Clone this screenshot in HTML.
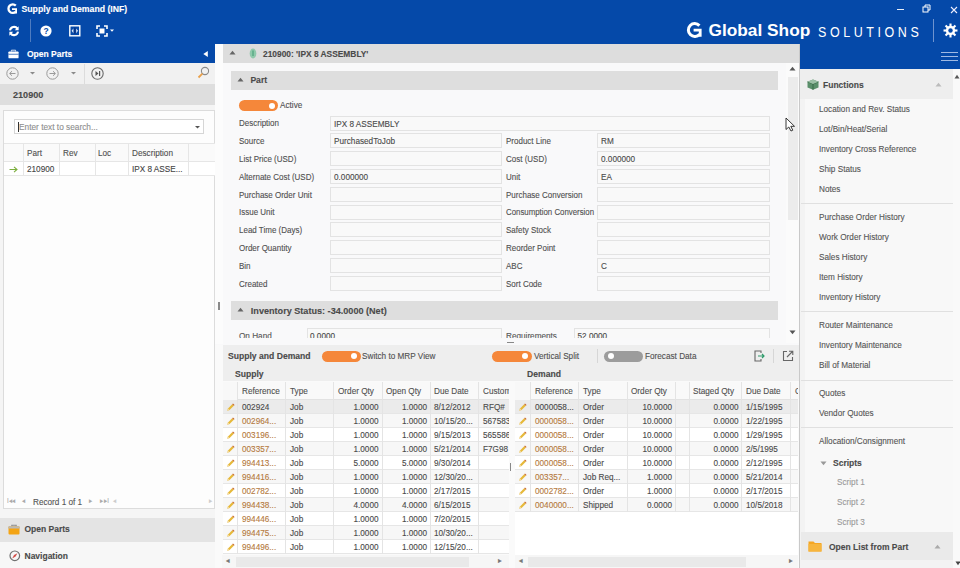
<!DOCTYPE html>
<html><head><meta charset="utf-8"><style>
*{margin:0;padding:0;box-sizing:border-box}
html,body{width:960px;height:568px;overflow:hidden}
body{position:relative;background:#f8f8f8;font-family:"Liberation Sans",sans-serif;font-size:8px;color:#555}
.a{position:absolute}
.t{position:absolute;white-space:nowrap;line-height:1;-webkit-text-stroke:0.12px currentColor}
svg{overflow:visible}
</style></head><body>
<div class="a" style="left:0px;top:0px;width:960px;height:44px;background:#0549a9"></div>
<div class="a" style="left:0px;top:44px;width:215px;height:19px;background:#0549a9"></div>
<div class="a" style="left:800px;top:44px;width:160px;height:25px;background:#0549a9"></div>
<div class="t" style="left:21.5px;top:4.64px;font-size:8.70px;color:#ffffff;font-weight:bold;">Supply and Demand (INF)</div>
<svg class="a" style="left:6px;top:3px" width="13" height="12" viewBox="0 0 13 12">
<path d="M9.8 2.6 A4.3 4.3 0 1 0 9.9 8.6" fill="none" stroke="#fff" stroke-width="2.3"/><path d="M6 5.2H11V10.6H9.2V6.9H6Z" fill="#fff"/></svg>
<div class="a" style="left:897px;top:9px;width:7px;height:1.2px;background:#e8eef8"></div>
<svg class="a" style="left:922px;top:4px" width="9" height="9" viewBox="0 0 9 9"><rect x="1" y="3" width="5" height="5" fill="none" stroke="#fff" stroke-width="1"/><path d="M3 3V1h5v5H6" fill="none" stroke="#fff" stroke-width="1"/></svg>
<svg class="a" style="left:949.5px;top:5.5px" width="8" height="8" viewBox="0 0 8 8"><path d="M1 1L7 7M7 1L1 7" stroke="#eef" stroke-width="1.1"/></svg>
<svg class="a" style="left:685px;top:22px" width="18" height="17" viewBox="0 0 18 17">
<path d="M14.4 3.6 A6.4 6.4 0 1 0 14.6 12.2" fill="none" stroke="#fff" stroke-width="3"/><path d="M8.6 6.8H16.6V14.8H13.8V9.6H8.6Z" fill="#fff"/></svg>
<div class="t" style="left:708.5px;top:22.06px;font-size:17.30px;color:#ffffff;font-weight:bold;-webkit-text-stroke:0;">Global Shop</div>
<div class="t" style="left:817.5px;top:24.55px;font-size:14.00px;color:#ffffff;transform:scaleX(0.8929);transform-origin:left top;letter-spacing:4px;-webkit-text-stroke:0;">SOLUTIONS</div>
<div class="a" style="left:933px;top:19px;width:1px;height:23px;background:#6f93cf"></div>
<svg class="a" style="left:943px;top:23px" width="15" height="15" viewBox="0 0 17 17">
<g fill="#fff"><circle cx="8.5" cy="8.5" r="5.4"/><rect x="7.3" y="0.6" width="2.4" height="4" transform="rotate(0 8.5 8.5)"/><rect x="7.3" y="0.6" width="2.4" height="4" transform="rotate(45 8.5 8.5)"/><rect x="7.3" y="0.6" width="2.4" height="4" transform="rotate(90 8.5 8.5)"/><rect x="7.3" y="0.6" width="2.4" height="4" transform="rotate(135 8.5 8.5)"/><rect x="7.3" y="0.6" width="2.4" height="4" transform="rotate(180 8.5 8.5)"/><rect x="7.3" y="0.6" width="2.4" height="4" transform="rotate(225 8.5 8.5)"/><rect x="7.3" y="0.6" width="2.4" height="4" transform="rotate(270 8.5 8.5)"/><rect x="7.3" y="0.6" width="2.4" height="4" transform="rotate(315 8.5 8.5)"/></g>
<circle cx="8.5" cy="8.5" r="2.5" fill="#0549a9"/></svg>
<svg class="a" style="left:8px;top:25px" width="12" height="12" viewBox="0 0 12 12">
<path d="M2 5.4 A4.1 4.1 0 0 1 9.4 3.6" fill="none" stroke="#fff" stroke-width="2.1"/><path d="M10.6 1.2 L10.6 5.2 L6.8 5.2Z" fill="#fff"/>
<path d="M10 6.6 A4.1 4.1 0 0 1 2.6 8.4" fill="none" stroke="#fff" stroke-width="2.1"/><path d="M1.4 10.8 L1.4 6.8 L5.2 6.8Z" fill="#fff"/></svg>
<div class="a" style="left:29.5px;top:19px;width:1.5px;height:23px;background:#4f7cc0"></div>
<svg class="a" style="left:40px;top:25px" width="12" height="12" viewBox="0 0 12 12"><circle cx="6" cy="6" r="5.6" fill="#fff"/>
<text x="6" y="9.2" font-family="Liberation Sans" font-weight="bold" font-size="8.5" text-anchor="middle" fill="#0549a9">?</text></svg>
<svg class="a" style="left:68.5px;top:25px" width="12" height="12" viewBox="0 0 12 12"><rect x="0.8" y="0.8" width="10" height="10" fill="none" stroke="#fff" stroke-width="1.4"/>
<path d="M2.6 5.8L4.4 3.4V8.2Z M9 5.8L7.2 3.4V8.2Z" fill="#dfe8f6"/><rect x="5.2" y="2.6" width="1.2" height="6.4" fill="#0a2e7a"/></svg>
<svg class="a" style="left:96px;top:25px" width="20" height="12" viewBox="0 0 20 12">
<path d="M1 4V1h3M8 1h3v3M11 8v3H8M4 11H1V8" fill="none" stroke="#fff" stroke-width="1.6"/><rect x="3.5" y="3.5" width="5" height="5" fill="#fff"/>
<path d="M14 4.5h4l-2 2.2z" fill="#fff"/></svg>
<svg class="a" style="left:8px;top:48.5px" width="11" height="10" viewBox="0 0 13 11">
<path d="M4 2.5V1h5v1.5" fill="none" stroke="#fff" stroke-width="1"/><rect x="0.5" y="2.5" width="12" height="8" rx="1" fill="#fff"/><rect x="0.5" y="5.3" width="12" height="0.8" fill="#0549a9"/></svg>
<div class="t" style="left:27px;top:49.60px;font-size:8.50px;color:#ffffff;font-weight:bold;">Open Parts</div>
<svg class="a" style="left:203px;top:50.5px" width="5" height="6" viewBox="0 0 5 6"><path d="M4.8 0V6L0.3 3Z" fill="#fff"/></svg>
<div class="a" style="left:0px;top:63px;width:215px;height:505px;background:#f5f5f5"></div>
<div class="a" style="left:0px;top:63px;width:215px;height:21px;background:#f1f1f1"></div>
<svg class="a" style="left:6px;top:67px" width="13" height="13" viewBox="0 0 13 13"><circle cx="6.5" cy="6.5" r="5.7" fill="none" stroke="#9a9a9a" stroke-width="1"/><path d="M9.5 6.5H3.8M6 4.2L3.6 6.5 6 8.8" fill="none" stroke="#9a9a9a" stroke-width="1"/></svg>
<svg class="a" style="left:30px;top:71px" width="5" height="4" viewBox="0 0 5 4"><path d="M0 1h5L2.5 3.5z" fill="#8a8a8a"/></svg>
<svg class="a" style="left:46px;top:67px" width="13" height="13" viewBox="0 0 13 13"><circle cx="6.5" cy="6.5" r="5.7" fill="none" stroke="#9a9a9a" stroke-width="1"/><path d="M3.5 6.5H9.2M7 4.2L9.4 6.5 7 8.8" fill="none" stroke="#9a9a9a" stroke-width="1"/></svg>
<svg class="a" style="left:71px;top:71px" width="5" height="4" viewBox="0 0 5 4"><path d="M0 1h5L2.5 3.5z" fill="#8a8a8a"/></svg>
<div class="a" style="left:84px;top:64px;width:1px;height:20px;background:#dcdcdc"></div>
<svg class="a" style="left:91px;top:67px" width="13" height="13" viewBox="0 0 13 13"><circle cx="6.5" cy="6.5" r="5.7" fill="none" stroke="#6a6a6a" stroke-width="1.1"/><path d="M4.5 4v5l3-2.5z" fill="#555"/><rect x="8" y="4" width="1.2" height="5" fill="#555"/></svg>
<svg class="a" style="left:197px;top:66px" width="13" height="13" viewBox="0 0 13 13"><circle cx="8" cy="5" r="3.6" fill="none" stroke="#8a8a8a" stroke-width="1.1"/><path d="M5.4 7.6L1.5 11.5" stroke="#e9a04a" stroke-width="1.8"/></svg>
<div class="a" style="left:0px;top:84px;width:215px;height:21px;background:#dedede"></div>
<div class="t" style="left:13px;top:90.60px;font-size:9.10px;color:#4a4a4a;font-weight:bold;">210900</div>
<div class="a" style="left:3px;top:110px;width:212px;height:399px;background:#fdfdfd;border:1px solid #dcdcdc"></div>
<div class="a" style="left:14px;top:119px;width:190px;height:15px;background:#fff;border:1px solid #d6d6d6"></div>
<div class="a" style="left:18px;top:122px;width:1px;height:10px;background:#333"></div>
<div class="t" style="left:19px;top:123.13px;font-size:9.30px;color:#8e8e8e;transform:scaleX(0.8929);transform-origin:left top;">Enter text to search...</div>
<svg class="a" style="left:195px;top:125px" width="5" height="4" viewBox="0 0 5 4"><path d="M0 1h5L2.5 3.5z" fill="#555"/></svg>
<div class="a" style="left:4px;top:143px;width:211px;height:19px;background:#fafafa;border-top:1px solid #e6e6e6;border-bottom:1px solid #e6e6e6"></div>
<div class="a" style="left:4px;top:162px;width:211px;height:14px;background:#fff;border-bottom:1px solid #e6e6e6"></div>
<div class="a" style="left:23px;top:143px;width:1px;height:33px;background:#e6e6e6"></div>
<div class="a" style="left:59px;top:143px;width:1px;height:33px;background:#e6e6e6"></div>
<div class="a" style="left:95px;top:143px;width:1px;height:33px;background:#e6e6e6"></div>
<div class="a" style="left:128px;top:143px;width:1px;height:33px;background:#e6e6e6"></div>
<div class="a" style="left:188px;top:143px;width:1px;height:33px;background:#e6e6e6"></div>
<div class="t" style="left:27px;top:149.23px;font-size:9.18px;color:#505050;transform:scaleX(0.8929);transform-origin:left top;">Part</div>
<div class="t" style="left:63px;top:149.23px;font-size:9.18px;color:#505050;transform:scaleX(0.8929);transform-origin:left top;">Rev</div>
<div class="t" style="left:98px;top:149.23px;font-size:9.18px;color:#505050;transform:scaleX(0.8929);transform-origin:left top;">Loc</div>
<div class="t" style="left:132px;top:149.23px;font-size:9.18px;color:#505050;transform:scaleX(0.8929);transform-origin:left top;">Description</div>
<div class="t" style="left:27px;top:165.23px;font-size:9.18px;color:#444;transform:scaleX(0.8929);transform-origin:left top;">210900</div>
<div class="t" style="left:132px;top:165.23px;font-size:9.18px;color:#444;transform:scaleX(0.8929);transform-origin:left top;">IPX 8 ASSE...</div>
<svg class="a" style="left:9px;top:166px" width="9" height="7" viewBox="0 0 9 7"><path d="M0.5 3.5H8M5 0.8L8 3.5 5 6.2" fill="none" stroke="#7cae3e" stroke-width="1.1"/></svg>
<div class="t" style="left:7px;top:498.31px;font-size:6.72px;color:#aaa;transform:scaleX(0.8929);transform-origin:left top;">I◂◂</div>
<div class="t" style="left:22px;top:498.31px;font-size:6.72px;color:#aaa;transform:scaleX(0.8929);transform-origin:left top;">◂</div>
<div class="t" style="left:33px;top:497.53px;font-size:9.18px;color:#555;transform:scaleX(0.8929);transform-origin:left top;">Record 1 of 1</div>
<div class="t" style="left:89px;top:498.31px;font-size:6.72px;color:#aaa;transform:scaleX(0.8929);transform-origin:left top;">▸</div>
<div class="t" style="left:100px;top:498.31px;font-size:6.72px;color:#aaa;transform:scaleX(0.8929);transform-origin:left top;">▸▸I</div>
<div class="t" style="left:113px;top:498.31px;font-size:6.72px;color:#ccc;transform:scaleX(0.8929);transform-origin:left top;">◂</div>
<div class="t" style="left:209px;top:498.31px;font-size:6.72px;color:#ccc;transform:scaleX(0.8929);transform-origin:left top;">▸</div>
<div class="a" style="left:0px;top:517.5px;width:215px;height:24.5px;background:#e4e4e4"></div>
<svg class="a" style="left:8px;top:523.5px" width="12" height="11" viewBox="0 0 12 11"><path d="M3.8 2.5V1.2h4.4v1.3" fill="none" stroke="#8c8c8c" stroke-width="1.1"/><rect x="0.5" y="2.3" width="11" height="8.2" rx="1" fill="#f4a414"/><rect x="0.5" y="2.3" width="11" height="2.2" fill="#b9b9b9"/></svg>
<div class="t" style="left:24.5px;top:525.30px;font-size:8.50px;color:#4a4a4a;font-weight:bold;">Open Parts</div>
<div class="a" style="left:0px;top:542px;width:215px;height:26px;background:#f7f7f7"></div>
<svg class="a" style="left:8.5px;top:550px" width="12" height="12" viewBox="0 0 12 12"><circle cx="5.8" cy="5.8" r="4.8" fill="none" stroke="#707070" stroke-width="1.2"/><path d="M8.4 3.2L6.6 6.6 3.2 8.4 5 5z" fill="#d2504a"/></svg>
<div class="t" style="left:24.5px;top:551.80px;font-size:8.50px;color:#4a4a4a;font-weight:bold;">Navigation</div>
<div class="a" style="left:215px;top:44px;width:585px;height:524px;background:#f9f9fa"></div>
<div class="a" style="left:215px;top:44px;width:8px;height:300px;background:#fcfcfc"></div>
<div class="a" style="left:223px;top:44px;width:577px;height:19px;background:#dddddd"></div>
<svg class="a" style="left:229px;top:50px" width="7" height="5" viewBox="0 0 7 5"><path d="M0.5 4.5h6L3.5 0.8z" fill="#666"/></svg>
<svg class="a" style="left:249px;top:47.5px" width="8" height="11" viewBox="0 0 8 11"><ellipse cx="4" cy="5.5" rx="3.3" ry="5" fill="#8fc9ab"/><path d="M4 2.5V8" stroke="#3f9a72" stroke-width="1"/></svg>
<div class="t" style="left:263px;top:49.69px;font-size:8.40px;color:#4a4a4a;font-weight:bold;">210900: 'IPX 8 ASSEMBLY'</div>
<div class="a" style="left:231px;top:71px;width:547px;height:19px;background:#dedede"></div>
<svg class="a" style="left:237px;top:77px" width="7" height="5" viewBox="0 0 7 5"><path d="M0.5 4.5h6L3.5 0.8z" fill="#666"/></svg>
<div class="t" style="left:250.4px;top:75.92px;font-size:8.60px;color:#4a4a4a;font-weight:bold;">Part</div>
<div class="a" style="left:239px;top:100px;width:39px;height:11px;border-radius:5.5px;background:#f5873a"></div>
<div class="a" style="left:268.5px;top:102.5px;width:6px;height:6px;border-radius:3px;background:#fff"></div>
<div class="t" style="left:280px;top:101.43px;font-size:9.18px;color:#505050;transform:scaleX(0.8929);transform-origin:left top;">Active</div>
<div class="t" style="left:239px;top:119.32px;font-size:8.96px;color:#505050;transform:scaleX(0.8929);transform-origin:left top;">Description</div>
<div class="a" style="left:330px;top:115.5px;width:440px;height:15px;background:#f9f9f9;border:1px solid #e3e3e3"></div>
<div class="t" style="left:333.5px;top:119.53px;font-size:9.18px;color:#4a4a4a;transform:scaleX(0.8929);transform-origin:left top;">IPX 8 ASSEMBLY</div>
<div class="t" style="left:239px;top:137.12px;font-size:8.96px;color:#505050;transform:scaleX(0.8929);transform-origin:left top;">Source</div>
<div class="a" style="left:330px;top:133.3px;width:172px;height:15px;background:#f9f9f9;border:1px solid #e3e3e3"></div>
<div class="t" style="left:333.5px;top:137.33px;font-size:9.18px;color:#4a4a4a;transform:scaleX(0.8929);transform-origin:left top;">PurchasedToJob</div>
<div class="t" style="left:506px;top:137.12px;font-size:8.96px;color:#505050;transform:scaleX(0.8929);transform-origin:left top;">Product Line</div>
<div class="a" style="left:597px;top:133.3px;width:173px;height:15px;background:#f9f9f9;border:1px solid #e3e3e3"></div>
<div class="t" style="left:600.5px;top:137.33px;font-size:9.18px;color:#4a4a4a;transform:scaleX(0.8929);transform-origin:left top;">RM</div>
<div class="t" style="left:239px;top:154.92px;font-size:8.96px;color:#505050;transform:scaleX(0.8929);transform-origin:left top;">List Price (USD)</div>
<div class="a" style="left:330px;top:151.1px;width:172px;height:15px;background:#f9f9f9;border:1px solid #e3e3e3"></div>
<div class="t" style="left:506px;top:154.92px;font-size:8.96px;color:#505050;transform:scaleX(0.8929);transform-origin:left top;">Cost (USD)</div>
<div class="a" style="left:597px;top:151.1px;width:173px;height:15px;background:#f9f9f9;border:1px solid #e3e3e3"></div>
<div class="t" style="left:600.5px;top:155.13px;font-size:9.18px;color:#4a4a4a;transform:scaleX(0.8929);transform-origin:left top;">0.000000</div>
<div class="t" style="left:239px;top:172.72px;font-size:8.96px;color:#505050;transform:scaleX(0.8929);transform-origin:left top;">Alternate Cost (USD)</div>
<div class="a" style="left:330px;top:168.9px;width:172px;height:15px;background:#f9f9f9;border:1px solid #e3e3e3"></div>
<div class="t" style="left:333.5px;top:172.93px;font-size:9.18px;color:#4a4a4a;transform:scaleX(0.8929);transform-origin:left top;">0.000000</div>
<div class="t" style="left:506px;top:172.72px;font-size:8.96px;color:#505050;transform:scaleX(0.8929);transform-origin:left top;">Unit</div>
<div class="a" style="left:597px;top:168.9px;width:173px;height:15px;background:#f9f9f9;border:1px solid #e3e3e3"></div>
<div class="t" style="left:600.5px;top:172.93px;font-size:9.18px;color:#4a4a4a;transform:scaleX(0.8929);transform-origin:left top;">EA</div>
<div class="t" style="left:239px;top:190.52px;font-size:8.96px;color:#505050;transform:scaleX(0.8929);transform-origin:left top;">Purchase Order Unit</div>
<div class="a" style="left:330px;top:186.7px;width:172px;height:15px;background:#f9f9f9;border:1px solid #e3e3e3"></div>
<div class="t" style="left:506px;top:190.52px;font-size:8.96px;color:#505050;transform:scaleX(0.8929);transform-origin:left top;">Purchase Conversion</div>
<div class="a" style="left:597px;top:186.7px;width:173px;height:15px;background:#f9f9f9;border:1px solid #e3e3e3"></div>
<div class="t" style="left:239px;top:208.32px;font-size:8.96px;color:#505050;transform:scaleX(0.8929);transform-origin:left top;">Issue Unit</div>
<div class="a" style="left:330px;top:204.5px;width:172px;height:15px;background:#f9f9f9;border:1px solid #e3e3e3"></div>
<div class="t" style="left:506px;top:208.46px;font-size:8.79px;color:#505050;transform:scaleX(0.8929);transform-origin:left top;">Consumption Conversion</div>
<div class="a" style="left:597px;top:204.5px;width:173px;height:15px;background:#f9f9f9;border:1px solid #e3e3e3"></div>
<div class="t" style="left:239px;top:226.12px;font-size:8.96px;color:#505050;transform:scaleX(0.8929);transform-origin:left top;">Lead Time (Days)</div>
<div class="a" style="left:330px;top:222.3px;width:172px;height:15px;background:#f9f9f9;border:1px solid #e3e3e3"></div>
<div class="t" style="left:506px;top:226.12px;font-size:8.96px;color:#505050;transform:scaleX(0.8929);transform-origin:left top;">Safety Stock</div>
<div class="a" style="left:597px;top:222.3px;width:173px;height:15px;background:#f9f9f9;border:1px solid #e3e3e3"></div>
<div class="t" style="left:239px;top:243.92px;font-size:8.96px;color:#505050;transform:scaleX(0.8929);transform-origin:left top;">Order Quantity</div>
<div class="a" style="left:330px;top:240.10000000000002px;width:172px;height:15px;background:#f9f9f9;border:1px solid #e3e3e3"></div>
<div class="t" style="left:506px;top:243.92px;font-size:8.96px;color:#505050;transform:scaleX(0.8929);transform-origin:left top;">Reorder Point</div>
<div class="a" style="left:597px;top:240.10000000000002px;width:173px;height:15px;background:#f9f9f9;border:1px solid #e3e3e3"></div>
<div class="t" style="left:239px;top:261.72px;font-size:8.96px;color:#505050;transform:scaleX(0.8929);transform-origin:left top;">Bin</div>
<div class="a" style="left:330px;top:257.9px;width:172px;height:15px;background:#f9f9f9;border:1px solid #e3e3e3"></div>
<div class="t" style="left:506px;top:261.72px;font-size:8.96px;color:#505050;transform:scaleX(0.8929);transform-origin:left top;">ABC</div>
<div class="a" style="left:597px;top:257.9px;width:173px;height:15px;background:#f9f9f9;border:1px solid #e3e3e3"></div>
<div class="t" style="left:600.5px;top:261.93px;font-size:9.18px;color:#4a4a4a;transform:scaleX(0.8929);transform-origin:left top;">C</div>
<div class="t" style="left:239px;top:279.52px;font-size:8.96px;color:#505050;transform:scaleX(0.8929);transform-origin:left top;">Created</div>
<div class="a" style="left:330px;top:275.70000000000005px;width:172px;height:15px;background:#f9f9f9;border:1px solid #e3e3e3"></div>
<div class="t" style="left:506px;top:279.52px;font-size:8.96px;color:#505050;transform:scaleX(0.8929);transform-origin:left top;">Sort Code</div>
<div class="a" style="left:597px;top:275.70000000000005px;width:173px;height:15px;background:#f9f9f9;border:1px solid #e3e3e3"></div>
<div class="a" style="left:231px;top:301px;width:547px;height:19px;background:#dedede"></div>
<svg class="a" style="left:237px;top:307px" width="7" height="5" viewBox="0 0 7 5"><path d="M0.5 4.5h6L3.5 0.8z" fill="#666"/></svg>
<div class="t" style="left:250.8px;top:306.50px;font-size:9.10px;color:#4a4a4a;font-weight:bold;">Inventory Status: -34.0000 (Net)</div>
<div class="a" style="left:223px;top:323px;width:570px;height:15px;overflow:hidden">
<div class="t" style="left:16px;top:10px;font-size:8.2px;color:#555">On Hand</div>
<div class="a" style="left:83.5px;top:5px;width:195.5px;height:15px;background:#f9f9f9;border:1px solid #e3e3e3"></div>
<div class="t" style="left:87px;top:10px;font-size:8.2px;color:#4a4a4a">0.0000</div>
<div class="t" style="left:283px;top:10px;font-size:8.2px;color:#555">Requirements</div>
<div class="a" style="left:351px;top:5px;width:196px;height:15px;background:#f9f9f9;border:1px solid #e3e3e3"></div>
<div class="t" style="left:354.5px;top:10px;font-size:8.2px;color:#4a4a4a">52.0000</div>
</div>
<div class="a" style="left:786px;top:63px;width:13px;height:280px;background:#fbfbfb"></div>
<div class="a" style="left:787.5px;top:77px;width:10.5px;height:143px;background:#ececec"></div>
<svg class="a" style="left:789px;top:66px" width="7" height="5" viewBox="0 0 7 5"><path d="M0.5 4.5h6L3.5 0.8z" fill="#555"/></svg>
<svg class="a" style="left:789px;top:330px" width="7" height="5" viewBox="0 0 7 5"><path d="M0.5 0.5h6L3.5 4.2z" fill="#555"/></svg>
<div class="a" style="left:218px;top:302px;width:1.5px;height:8px;background:#8a8a8a"></div>
<div class="a" style="left:215px;top:345px;width:585px;height:223px;background:#fafafa"></div>
<div class="a" style="left:223px;top:345px;width:577px;height:36px;background:#eeeeee"></div>
<div class="t" style="left:228px;top:352.22px;font-size:8.60px;color:#4a4a4a;font-weight:bold;">Supply and Demand</div>
<div class="a" style="left:321.5px;top:350.5px;width:39px;height:11.3px;border-radius:5.65px;background:#f5873a"></div>
<div class="a" style="left:350.85px;top:353.15px;width:6px;height:6px;border-radius:3px;background:#fff"></div>
<div class="t" style="left:362px;top:351.53px;font-size:9.18px;color:#505050;transform:scaleX(0.8929);transform-origin:left top;">Switch to MRP View</div>
<div class="a" style="left:492px;top:350.5px;width:40px;height:11.3px;border-radius:5.65px;background:#f5873a"></div>
<div class="a" style="left:522.35px;top:353.15px;width:6px;height:6px;border-radius:3px;background:#fff"></div>
<div class="t" style="left:533.5px;top:351.53px;font-size:9.18px;color:#505050;transform:scaleX(0.8929);transform-origin:left top;">Vertical Split</div>
<div class="a" style="left:597px;top:349px;width:1px;height:14px;background:#d6d6d6"></div>
<div class="a" style="left:604px;top:350.5px;width:39px;height:11.3px;border-radius:5.65px;background:#9c9c9c"></div>
<div class="a" style="left:607.65px;top:353.15px;width:6px;height:6px;border-radius:3px;background:#fff"></div>
<div class="t" style="left:645px;top:351.53px;font-size:9.18px;color:#505050;transform:scaleX(0.8929);transform-origin:left top;">Forecast Data</div>
<svg class="a" style="left:754px;top:350px" width="12" height="12" viewBox="0 0 12 12"><path d="M7 3V1H1v10h6V9" fill="none" stroke="#666" stroke-width="1.1"/><path d="M4 6h6M8 4l2 2-2 2" fill="none" stroke="#2e9a6a" stroke-width="1.2"/></svg>
<div class="a" style="left:773px;top:349px;width:1px;height:14px;background:#d6d6d6"></div>
<svg class="a" style="left:782px;top:350px" width="12" height="12" viewBox="0 0 12 12"><path d="M5 1.5H1.5v9h9V7" fill="none" stroke="#666" stroke-width="1.1"/><path d="M5 7l5.5-5.5M7 1.2h3.8V5" fill="none" stroke="#666" stroke-width="1.1"/></svg>
<div class="t" style="left:235px;top:370.02px;font-size:8.60px;color:#4a4a4a;font-weight:bold;">Supply</div>
<div class="t" style="left:527px;top:370.02px;font-size:8.60px;color:#4a4a4a;font-weight:bold;">Demand</div>
<div class="a" style="left:0;top:0;width:509px;height:568px;overflow:hidden">
<div class="a" style="left:223px;top:382px;width:286px;height:18px;background:#f9f9f9;border-bottom:1px solid #e2e2e2"></div>
<div class="a" style="left:223px;top:382px;width:14px;height:18px;background:#f8f8f8"></div>
<div class="a" style="left:223px;top:400px;width:286px;height:14px;background:#ebebeb;border-bottom:1px solid #e6e6e6"></div>
<div class="a" style="left:223px;top:414px;width:286px;height:14px;background:#f7f7f7;border-bottom:1px solid #e6e6e6"></div>
<div class="a" style="left:223px;top:428px;width:286px;height:14px;background:#ffffff;border-bottom:1px solid #e6e6e6"></div>
<div class="a" style="left:223px;top:442px;width:286px;height:14px;background:#f7f7f7;border-bottom:1px solid #e6e6e6"></div>
<div class="a" style="left:223px;top:456px;width:286px;height:14px;background:#ffffff;border-bottom:1px solid #e6e6e6"></div>
<div class="a" style="left:223px;top:470px;width:286px;height:14px;background:#f7f7f7;border-bottom:1px solid #e6e6e6"></div>
<div class="a" style="left:223px;top:484px;width:286px;height:14px;background:#ffffff;border-bottom:1px solid #e6e6e6"></div>
<div class="a" style="left:223px;top:498px;width:286px;height:14px;background:#f7f7f7;border-bottom:1px solid #e6e6e6"></div>
<div class="a" style="left:223px;top:512px;width:286px;height:14px;background:#ffffff;border-bottom:1px solid #e6e6e6"></div>
<div class="a" style="left:223px;top:526px;width:286px;height:14px;background:#f7f7f7;border-bottom:1px solid #e6e6e6"></div>
<div class="a" style="left:223px;top:540px;width:286px;height:14px;background:#ffffff;border-bottom:1px solid #e6e6e6"></div>
<div class="a" style="left:237px;top:382px;width:1px;height:172px;background:#e4e4e4"></div>
<div class="a" style="left:285px;top:382px;width:1px;height:172px;background:#e4e4e4"></div>
<div class="a" style="left:333px;top:382px;width:1px;height:172px;background:#e4e4e4"></div>
<div class="a" style="left:381.5px;top:382px;width:1px;height:172px;background:#e4e4e4"></div>
<div class="a" style="left:429.5px;top:382px;width:1px;height:172px;background:#e4e4e4"></div>
<div class="a" style="left:478px;top:382px;width:1px;height:172px;background:#e4e4e4"></div>
<div class="t" style="left:241.5px;top:386.83px;font-size:9.18px;color:#505050;transform:scaleX(0.8929);transform-origin:left top;">Reference</div>
<div class="t" style="left:289.5px;top:386.83px;font-size:9.18px;color:#505050;transform:scaleX(0.8929);transform-origin:left top;">Type</div>
<div class="t" style="left:337.5px;top:386.83px;font-size:9.18px;color:#505050;transform:scaleX(0.8929);transform-origin:left top;">Order Qty</div>
<div class="t" style="left:386.0px;top:386.83px;font-size:9.18px;color:#505050;transform:scaleX(0.8929);transform-origin:left top;">Open Qty</div>
<div class="t" style="left:434.0px;top:386.83px;font-size:9.18px;color:#505050;transform:scaleX(0.8929);transform-origin:left top;">Due Date</div>
<div class="t" style="left:482.5px;top:386.83px;font-size:9.18px;color:#505050;transform:scaleX(0.8929);transform-origin:left top;">Custom</div>
<svg class="a" style="left:226px;top:402.5px" width="9" height="9" viewBox="0 0 9 9"><path d="M1.2 7.8L2 5.4 6.2 1.2 7.8 2.8 3.6 7Z" fill="#e6b93a"/><path d="M6.2 1.2L7 0.4 8.6 2 7.8 2.8Z" fill="#c8662a"/><path d="M1.2 7.8L2 5.4 3.6 7Z" fill="#f3dca8"/></svg>
<div class="t" style="left:241.7px;top:402.83px;font-size:9.18px;color:#4a4a4a;transform:scaleX(0.8929);transform-origin:left top;">002924</div>
<div class="t" style="left:289.7px;top:402.83px;font-size:9.18px;color:#4a4a4a;transform:scaleX(0.8929);transform-origin:left top;">Job</div>
<div class="t" style="left:334.0px;width:44.5px;text-align:right;top:402.83px;font-size:9.18px;color:#4a4a4a;transform:scaleX(0.8929);transform-origin:right top;">1.0000</div>
<div class="t" style="left:382.5px;width:44.0px;text-align:right;top:402.83px;font-size:9.18px;color:#4a4a4a;transform:scaleX(0.8929);transform-origin:right top;">1.0000</div>
<div class="t" style="left:434.2px;top:402.83px;font-size:9.18px;color:#4a4a4a;transform:scaleX(0.8929);transform-origin:left top;">8/12/2012</div>
<div class="t" style="left:482.7px;top:402.83px;font-size:9.18px;color:#4a4a4a;transform:scaleX(0.8929);transform-origin:left top;">RFQ#</div>
<svg class="a" style="left:226px;top:416.5px" width="9" height="9" viewBox="0 0 9 9"><path d="M1.2 7.8L2 5.4 6.2 1.2 7.8 2.8 3.6 7Z" fill="#e6b93a"/><path d="M6.2 1.2L7 0.4 8.6 2 7.8 2.8Z" fill="#c8662a"/><path d="M1.2 7.8L2 5.4 3.6 7Z" fill="#f3dca8"/></svg>
<div class="t" style="left:241.7px;top:416.83px;font-size:9.18px;color:#b57a3e;transform:scaleX(0.8929);transform-origin:left top;">002964...</div>
<div class="t" style="left:289.7px;top:416.83px;font-size:9.18px;color:#4a4a4a;transform:scaleX(0.8929);transform-origin:left top;">Job</div>
<div class="t" style="left:334.0px;width:44.5px;text-align:right;top:416.83px;font-size:9.18px;color:#4a4a4a;transform:scaleX(0.8929);transform-origin:right top;">1.0000</div>
<div class="t" style="left:382.5px;width:44.0px;text-align:right;top:416.83px;font-size:9.18px;color:#4a4a4a;transform:scaleX(0.8929);transform-origin:right top;">1.0000</div>
<div class="t" style="left:434.2px;top:416.83px;font-size:9.18px;color:#4a4a4a;transform:scaleX(0.8929);transform-origin:left top;">10/15/20...</div>
<div class="t" style="left:482.7px;top:416.83px;font-size:9.18px;color:#4a4a4a;transform:scaleX(0.8929);transform-origin:left top;">567583</div>
<svg class="a" style="left:226px;top:430.5px" width="9" height="9" viewBox="0 0 9 9"><path d="M1.2 7.8L2 5.4 6.2 1.2 7.8 2.8 3.6 7Z" fill="#e6b93a"/><path d="M6.2 1.2L7 0.4 8.6 2 7.8 2.8Z" fill="#c8662a"/><path d="M1.2 7.8L2 5.4 3.6 7Z" fill="#f3dca8"/></svg>
<div class="t" style="left:241.7px;top:430.83px;font-size:9.18px;color:#b57a3e;transform:scaleX(0.8929);transform-origin:left top;">003196...</div>
<div class="t" style="left:289.7px;top:430.83px;font-size:9.18px;color:#4a4a4a;transform:scaleX(0.8929);transform-origin:left top;">Job</div>
<div class="t" style="left:334.0px;width:44.5px;text-align:right;top:430.83px;font-size:9.18px;color:#4a4a4a;transform:scaleX(0.8929);transform-origin:right top;">1.0000</div>
<div class="t" style="left:382.5px;width:44.0px;text-align:right;top:430.83px;font-size:9.18px;color:#4a4a4a;transform:scaleX(0.8929);transform-origin:right top;">1.0000</div>
<div class="t" style="left:434.2px;top:430.83px;font-size:9.18px;color:#4a4a4a;transform:scaleX(0.8929);transform-origin:left top;">9/15/2013</div>
<div class="t" style="left:482.7px;top:430.83px;font-size:9.18px;color:#4a4a4a;transform:scaleX(0.8929);transform-origin:left top;">565586</div>
<svg class="a" style="left:226px;top:444.5px" width="9" height="9" viewBox="0 0 9 9"><path d="M1.2 7.8L2 5.4 6.2 1.2 7.8 2.8 3.6 7Z" fill="#e6b93a"/><path d="M6.2 1.2L7 0.4 8.6 2 7.8 2.8Z" fill="#c8662a"/><path d="M1.2 7.8L2 5.4 3.6 7Z" fill="#f3dca8"/></svg>
<div class="t" style="left:241.7px;top:444.83px;font-size:9.18px;color:#b57a3e;transform:scaleX(0.8929);transform-origin:left top;">003357...</div>
<div class="t" style="left:289.7px;top:444.83px;font-size:9.18px;color:#4a4a4a;transform:scaleX(0.8929);transform-origin:left top;">Job</div>
<div class="t" style="left:334.0px;width:44.5px;text-align:right;top:444.83px;font-size:9.18px;color:#4a4a4a;transform:scaleX(0.8929);transform-origin:right top;">1.0000</div>
<div class="t" style="left:382.5px;width:44.0px;text-align:right;top:444.83px;font-size:9.18px;color:#4a4a4a;transform:scaleX(0.8929);transform-origin:right top;">1.0000</div>
<div class="t" style="left:434.2px;top:444.83px;font-size:9.18px;color:#4a4a4a;transform:scaleX(0.8929);transform-origin:left top;">5/21/2014</div>
<div class="t" style="left:482.7px;top:444.83px;font-size:9.18px;color:#4a4a4a;transform:scaleX(0.8929);transform-origin:left top;">F7G98</div>
<svg class="a" style="left:226px;top:458.5px" width="9" height="9" viewBox="0 0 9 9"><path d="M1.2 7.8L2 5.4 6.2 1.2 7.8 2.8 3.6 7Z" fill="#e6b93a"/><path d="M6.2 1.2L7 0.4 8.6 2 7.8 2.8Z" fill="#c8662a"/><path d="M1.2 7.8L2 5.4 3.6 7Z" fill="#f3dca8"/></svg>
<div class="t" style="left:241.7px;top:458.83px;font-size:9.18px;color:#b57a3e;transform:scaleX(0.8929);transform-origin:left top;">994413...</div>
<div class="t" style="left:289.7px;top:458.83px;font-size:9.18px;color:#4a4a4a;transform:scaleX(0.8929);transform-origin:left top;">Job</div>
<div class="t" style="left:334.0px;width:44.5px;text-align:right;top:458.83px;font-size:9.18px;color:#4a4a4a;transform:scaleX(0.8929);transform-origin:right top;">5.0000</div>
<div class="t" style="left:382.5px;width:44.0px;text-align:right;top:458.83px;font-size:9.18px;color:#4a4a4a;transform:scaleX(0.8929);transform-origin:right top;">5.0000</div>
<div class="t" style="left:434.2px;top:458.83px;font-size:9.18px;color:#4a4a4a;transform:scaleX(0.8929);transform-origin:left top;">9/30/2014</div>
<svg class="a" style="left:226px;top:472.5px" width="9" height="9" viewBox="0 0 9 9"><path d="M1.2 7.8L2 5.4 6.2 1.2 7.8 2.8 3.6 7Z" fill="#e6b93a"/><path d="M6.2 1.2L7 0.4 8.6 2 7.8 2.8Z" fill="#c8662a"/><path d="M1.2 7.8L2 5.4 3.6 7Z" fill="#f3dca8"/></svg>
<div class="t" style="left:241.7px;top:472.83px;font-size:9.18px;color:#b57a3e;transform:scaleX(0.8929);transform-origin:left top;">994416...</div>
<div class="t" style="left:289.7px;top:472.83px;font-size:9.18px;color:#4a4a4a;transform:scaleX(0.8929);transform-origin:left top;">Job</div>
<div class="t" style="left:334.0px;width:44.5px;text-align:right;top:472.83px;font-size:9.18px;color:#4a4a4a;transform:scaleX(0.8929);transform-origin:right top;">1.0000</div>
<div class="t" style="left:382.5px;width:44.0px;text-align:right;top:472.83px;font-size:9.18px;color:#4a4a4a;transform:scaleX(0.8929);transform-origin:right top;">1.0000</div>
<div class="t" style="left:434.2px;top:472.83px;font-size:9.18px;color:#4a4a4a;transform:scaleX(0.8929);transform-origin:left top;">12/30/20...</div>
<svg class="a" style="left:226px;top:486.5px" width="9" height="9" viewBox="0 0 9 9"><path d="M1.2 7.8L2 5.4 6.2 1.2 7.8 2.8 3.6 7Z" fill="#e6b93a"/><path d="M6.2 1.2L7 0.4 8.6 2 7.8 2.8Z" fill="#c8662a"/><path d="M1.2 7.8L2 5.4 3.6 7Z" fill="#f3dca8"/></svg>
<div class="t" style="left:241.7px;top:486.83px;font-size:9.18px;color:#b57a3e;transform:scaleX(0.8929);transform-origin:left top;">002782...</div>
<div class="t" style="left:289.7px;top:486.83px;font-size:9.18px;color:#4a4a4a;transform:scaleX(0.8929);transform-origin:left top;">Job</div>
<div class="t" style="left:334.0px;width:44.5px;text-align:right;top:486.83px;font-size:9.18px;color:#4a4a4a;transform:scaleX(0.8929);transform-origin:right top;">1.0000</div>
<div class="t" style="left:382.5px;width:44.0px;text-align:right;top:486.83px;font-size:9.18px;color:#4a4a4a;transform:scaleX(0.8929);transform-origin:right top;">1.0000</div>
<div class="t" style="left:434.2px;top:486.83px;font-size:9.18px;color:#4a4a4a;transform:scaleX(0.8929);transform-origin:left top;">2/17/2015</div>
<svg class="a" style="left:226px;top:500.5px" width="9" height="9" viewBox="0 0 9 9"><path d="M1.2 7.8L2 5.4 6.2 1.2 7.8 2.8 3.6 7Z" fill="#e6b93a"/><path d="M6.2 1.2L7 0.4 8.6 2 7.8 2.8Z" fill="#c8662a"/><path d="M1.2 7.8L2 5.4 3.6 7Z" fill="#f3dca8"/></svg>
<div class="t" style="left:241.7px;top:500.83px;font-size:9.18px;color:#b57a3e;transform:scaleX(0.8929);transform-origin:left top;">994438...</div>
<div class="t" style="left:289.7px;top:500.83px;font-size:9.18px;color:#4a4a4a;transform:scaleX(0.8929);transform-origin:left top;">Job</div>
<div class="t" style="left:334.0px;width:44.5px;text-align:right;top:500.83px;font-size:9.18px;color:#4a4a4a;transform:scaleX(0.8929);transform-origin:right top;">4.0000</div>
<div class="t" style="left:382.5px;width:44.0px;text-align:right;top:500.83px;font-size:9.18px;color:#4a4a4a;transform:scaleX(0.8929);transform-origin:right top;">4.0000</div>
<div class="t" style="left:434.2px;top:500.83px;font-size:9.18px;color:#4a4a4a;transform:scaleX(0.8929);transform-origin:left top;">6/15/2015</div>
<svg class="a" style="left:226px;top:514.5px" width="9" height="9" viewBox="0 0 9 9"><path d="M1.2 7.8L2 5.4 6.2 1.2 7.8 2.8 3.6 7Z" fill="#e6b93a"/><path d="M6.2 1.2L7 0.4 8.6 2 7.8 2.8Z" fill="#c8662a"/><path d="M1.2 7.8L2 5.4 3.6 7Z" fill="#f3dca8"/></svg>
<div class="t" style="left:241.7px;top:514.83px;font-size:9.18px;color:#b57a3e;transform:scaleX(0.8929);transform-origin:left top;">994446...</div>
<div class="t" style="left:289.7px;top:514.83px;font-size:9.18px;color:#4a4a4a;transform:scaleX(0.8929);transform-origin:left top;">Job</div>
<div class="t" style="left:334.0px;width:44.5px;text-align:right;top:514.83px;font-size:9.18px;color:#4a4a4a;transform:scaleX(0.8929);transform-origin:right top;">1.0000</div>
<div class="t" style="left:382.5px;width:44.0px;text-align:right;top:514.83px;font-size:9.18px;color:#4a4a4a;transform:scaleX(0.8929);transform-origin:right top;">1.0000</div>
<div class="t" style="left:434.2px;top:514.83px;font-size:9.18px;color:#4a4a4a;transform:scaleX(0.8929);transform-origin:left top;">7/20/2015</div>
<svg class="a" style="left:226px;top:528.5px" width="9" height="9" viewBox="0 0 9 9"><path d="M1.2 7.8L2 5.4 6.2 1.2 7.8 2.8 3.6 7Z" fill="#e6b93a"/><path d="M6.2 1.2L7 0.4 8.6 2 7.8 2.8Z" fill="#c8662a"/><path d="M1.2 7.8L2 5.4 3.6 7Z" fill="#f3dca8"/></svg>
<div class="t" style="left:241.7px;top:528.83px;font-size:9.18px;color:#b57a3e;transform:scaleX(0.8929);transform-origin:left top;">994475...</div>
<div class="t" style="left:289.7px;top:528.83px;font-size:9.18px;color:#4a4a4a;transform:scaleX(0.8929);transform-origin:left top;">Job</div>
<div class="t" style="left:334.0px;width:44.5px;text-align:right;top:528.83px;font-size:9.18px;color:#4a4a4a;transform:scaleX(0.8929);transform-origin:right top;">1.0000</div>
<div class="t" style="left:382.5px;width:44.0px;text-align:right;top:528.83px;font-size:9.18px;color:#4a4a4a;transform:scaleX(0.8929);transform-origin:right top;">1.0000</div>
<div class="t" style="left:434.2px;top:528.83px;font-size:9.18px;color:#4a4a4a;transform:scaleX(0.8929);transform-origin:left top;">10/30/20...</div>
<svg class="a" style="left:226px;top:542.5px" width="9" height="9" viewBox="0 0 9 9"><path d="M1.2 7.8L2 5.4 6.2 1.2 7.8 2.8 3.6 7Z" fill="#e6b93a"/><path d="M6.2 1.2L7 0.4 8.6 2 7.8 2.8Z" fill="#c8662a"/><path d="M1.2 7.8L2 5.4 3.6 7Z" fill="#f3dca8"/></svg>
<div class="t" style="left:241.7px;top:542.83px;font-size:9.18px;color:#b57a3e;transform:scaleX(0.8929);transform-origin:left top;">994496...</div>
<div class="t" style="left:289.7px;top:542.83px;font-size:9.18px;color:#4a4a4a;transform:scaleX(0.8929);transform-origin:left top;">Job</div>
<div class="t" style="left:334.0px;width:44.5px;text-align:right;top:542.83px;font-size:9.18px;color:#4a4a4a;transform:scaleX(0.8929);transform-origin:right top;">1.0000</div>
<div class="t" style="left:382.5px;width:44.0px;text-align:right;top:542.83px;font-size:9.18px;color:#4a4a4a;transform:scaleX(0.8929);transform-origin:right top;">1.0000</div>
<div class="t" style="left:434.2px;top:542.83px;font-size:9.18px;color:#4a4a4a;transform:scaleX(0.8929);transform-origin:left top;">12/15/20...</div>
</div>
<div class="a" style="left:222px;top:555px;width:287px;height:13px;background:#f6f6f6"></div>
<div class="a" style="left:236px;top:557px;width:233px;height:10px;background:#e9e9e9"></div>
<div class="t" style="left:226px;top:557.36px;font-size:7.84px;color:#777;transform:scaleX(0.8929);transform-origin:left top;">◂</div>
<div class="t" style="left:498px;top:557.36px;font-size:7.84px;color:#777;transform:scaleX(0.8929);transform-origin:left top;">▸</div>
<div class="a" style="left:509px;top:382px;width:6px;height:186px;background:#fafafa"></div>
<div class="a" style="left:510px;top:463px;width:1px;height:8px;background:#888"></div>
<div class="a" style="left:507px;top:342px;width:7px;height:1px;background:#888"></div>
<div class="a" style="left:0;top:0;width:798px;height:568px;overflow:hidden">
<div class="a" style="left:515px;top:382px;width:283px;height:173px;background:#ffffff"></div>
<div class="a" style="left:515px;top:382px;width:283px;height:18px;background:#f9f9f9;border-bottom:1px solid #e2e2e2"></div>
<div class="a" style="left:515px;top:382px;width:15px;height:18px;background:#f8f8f8"></div>
<div class="a" style="left:515px;top:400px;width:283px;height:14px;background:#ebebeb;border-bottom:1px solid #e6e6e6"></div>
<div class="a" style="left:515px;top:414px;width:283px;height:14px;background:#f7f7f7;border-bottom:1px solid #e6e6e6"></div>
<div class="a" style="left:515px;top:428px;width:283px;height:14px;background:#ffffff;border-bottom:1px solid #e6e6e6"></div>
<div class="a" style="left:515px;top:442px;width:283px;height:14px;background:#f7f7f7;border-bottom:1px solid #e6e6e6"></div>
<div class="a" style="left:515px;top:456px;width:283px;height:14px;background:#ffffff;border-bottom:1px solid #e6e6e6"></div>
<div class="a" style="left:515px;top:470px;width:283px;height:14px;background:#f7f7f7;border-bottom:1px solid #e6e6e6"></div>
<div class="a" style="left:515px;top:484px;width:283px;height:14px;background:#ffffff;border-bottom:1px solid #e6e6e6"></div>
<div class="a" style="left:515px;top:498px;width:283px;height:14px;background:#f7f7f7;border-bottom:1px solid #e6e6e6"></div>
<div class="a" style="left:530px;top:382px;width:1px;height:130px;background:#e4e4e4"></div>
<div class="a" style="left:578px;top:382px;width:1px;height:130px;background:#e4e4e4"></div>
<div class="a" style="left:626.5px;top:382px;width:1px;height:130px;background:#e4e4e4"></div>
<div class="a" style="left:674.5px;top:382px;width:1px;height:130px;background:#e4e4e4"></div>
<div class="a" style="left:688.5px;top:382px;width:1px;height:130px;background:#e4e4e4"></div>
<div class="a" style="left:741px;top:382px;width:1px;height:130px;background:#e4e4e4"></div>
<div class="a" style="left:790px;top:382px;width:1px;height:130px;background:#e4e4e4"></div>
<div class="t" style="left:534.5px;top:386.83px;font-size:9.18px;color:#505050;transform:scaleX(0.8929);transform-origin:left top;">Reference</div>
<div class="t" style="left:582.5px;top:386.83px;font-size:9.18px;color:#505050;transform:scaleX(0.8929);transform-origin:left top;">Type</div>
<div class="t" style="left:631.0px;top:386.83px;font-size:9.18px;color:#505050;transform:scaleX(0.8929);transform-origin:left top;">Order Qty</div>
<div class="t" style="left:693.0px;top:386.83px;font-size:9.18px;color:#505050;transform:scaleX(0.8929);transform-origin:left top;">Staged Qty</div>
<div class="t" style="left:745.5px;top:386.83px;font-size:9.18px;color:#505050;transform:scaleX(0.8929);transform-origin:left top;">Due Date</div>
<div class="t" style="left:794.5px;top:386.83px;font-size:9.18px;color:#505050;transform:scaleX(0.8929);transform-origin:left top;">C</div>
<svg class="a" style="left:518px;top:402.5px" width="9" height="9" viewBox="0 0 9 9"><path d="M1.2 7.8L2 5.4 6.2 1.2 7.8 2.8 3.6 7Z" fill="#e6b93a"/><path d="M6.2 1.2L7 0.4 8.6 2 7.8 2.8Z" fill="#c8662a"/><path d="M1.2 7.8L2 5.4 3.6 7Z" fill="#f3dca8"/></svg>
<div class="t" style="left:534.7px;top:402.83px;font-size:9.18px;color:#4a4a4a;transform:scaleX(0.8929);transform-origin:left top;">0000058...</div>
<div class="t" style="left:582.7px;top:402.83px;font-size:9.18px;color:#4a4a4a;transform:scaleX(0.8929);transform-origin:left top;">Order</div>
<div class="t" style="left:627.5px;width:44.0px;text-align:right;top:402.83px;font-size:9.18px;color:#4a4a4a;transform:scaleX(0.8929);transform-origin:right top;">10.0000</div>
<div class="t" style="left:689.5px;width:48.5px;text-align:right;top:402.83px;font-size:9.18px;color:#4a4a4a;transform:scaleX(0.8929);transform-origin:right top;">0.0000</div>
<div class="t" style="left:745.7px;top:402.83px;font-size:9.18px;color:#4a4a4a;transform:scaleX(0.8929);transform-origin:left top;">1/15/1995</div>
<svg class="a" style="left:518px;top:416.5px" width="9" height="9" viewBox="0 0 9 9"><path d="M1.2 7.8L2 5.4 6.2 1.2 7.8 2.8 3.6 7Z" fill="#e6b93a"/><path d="M6.2 1.2L7 0.4 8.6 2 7.8 2.8Z" fill="#c8662a"/><path d="M1.2 7.8L2 5.4 3.6 7Z" fill="#f3dca8"/></svg>
<div class="t" style="left:534.7px;top:416.83px;font-size:9.18px;color:#b57a3e;transform:scaleX(0.8929);transform-origin:left top;">0000058...</div>
<div class="t" style="left:582.7px;top:416.83px;font-size:9.18px;color:#4a4a4a;transform:scaleX(0.8929);transform-origin:left top;">Order</div>
<div class="t" style="left:627.5px;width:44.0px;text-align:right;top:416.83px;font-size:9.18px;color:#4a4a4a;transform:scaleX(0.8929);transform-origin:right top;">10.0000</div>
<div class="t" style="left:689.5px;width:48.5px;text-align:right;top:416.83px;font-size:9.18px;color:#4a4a4a;transform:scaleX(0.8929);transform-origin:right top;">0.0000</div>
<div class="t" style="left:745.7px;top:416.83px;font-size:9.18px;color:#4a4a4a;transform:scaleX(0.8929);transform-origin:left top;">1/22/1995</div>
<svg class="a" style="left:518px;top:430.5px" width="9" height="9" viewBox="0 0 9 9"><path d="M1.2 7.8L2 5.4 6.2 1.2 7.8 2.8 3.6 7Z" fill="#e6b93a"/><path d="M6.2 1.2L7 0.4 8.6 2 7.8 2.8Z" fill="#c8662a"/><path d="M1.2 7.8L2 5.4 3.6 7Z" fill="#f3dca8"/></svg>
<div class="t" style="left:534.7px;top:430.83px;font-size:9.18px;color:#b57a3e;transform:scaleX(0.8929);transform-origin:left top;">0000058...</div>
<div class="t" style="left:582.7px;top:430.83px;font-size:9.18px;color:#4a4a4a;transform:scaleX(0.8929);transform-origin:left top;">Order</div>
<div class="t" style="left:627.5px;width:44.0px;text-align:right;top:430.83px;font-size:9.18px;color:#4a4a4a;transform:scaleX(0.8929);transform-origin:right top;">10.0000</div>
<div class="t" style="left:689.5px;width:48.5px;text-align:right;top:430.83px;font-size:9.18px;color:#4a4a4a;transform:scaleX(0.8929);transform-origin:right top;">0.0000</div>
<div class="t" style="left:745.7px;top:430.83px;font-size:9.18px;color:#4a4a4a;transform:scaleX(0.8929);transform-origin:left top;">1/29/1995</div>
<svg class="a" style="left:518px;top:444.5px" width="9" height="9" viewBox="0 0 9 9"><path d="M1.2 7.8L2 5.4 6.2 1.2 7.8 2.8 3.6 7Z" fill="#e6b93a"/><path d="M6.2 1.2L7 0.4 8.6 2 7.8 2.8Z" fill="#c8662a"/><path d="M1.2 7.8L2 5.4 3.6 7Z" fill="#f3dca8"/></svg>
<div class="t" style="left:534.7px;top:444.83px;font-size:9.18px;color:#b57a3e;transform:scaleX(0.8929);transform-origin:left top;">0000058...</div>
<div class="t" style="left:582.7px;top:444.83px;font-size:9.18px;color:#4a4a4a;transform:scaleX(0.8929);transform-origin:left top;">Order</div>
<div class="t" style="left:627.5px;width:44.0px;text-align:right;top:444.83px;font-size:9.18px;color:#4a4a4a;transform:scaleX(0.8929);transform-origin:right top;">10.0000</div>
<div class="t" style="left:689.5px;width:48.5px;text-align:right;top:444.83px;font-size:9.18px;color:#4a4a4a;transform:scaleX(0.8929);transform-origin:right top;">0.0000</div>
<div class="t" style="left:745.7px;top:444.83px;font-size:9.18px;color:#4a4a4a;transform:scaleX(0.8929);transform-origin:left top;">2/5/1995</div>
<svg class="a" style="left:518px;top:458.5px" width="9" height="9" viewBox="0 0 9 9"><path d="M1.2 7.8L2 5.4 6.2 1.2 7.8 2.8 3.6 7Z" fill="#e6b93a"/><path d="M6.2 1.2L7 0.4 8.6 2 7.8 2.8Z" fill="#c8662a"/><path d="M1.2 7.8L2 5.4 3.6 7Z" fill="#f3dca8"/></svg>
<div class="t" style="left:534.7px;top:458.83px;font-size:9.18px;color:#b57a3e;transform:scaleX(0.8929);transform-origin:left top;">0000058...</div>
<div class="t" style="left:582.7px;top:458.83px;font-size:9.18px;color:#4a4a4a;transform:scaleX(0.8929);transform-origin:left top;">Order</div>
<div class="t" style="left:627.5px;width:44.0px;text-align:right;top:458.83px;font-size:9.18px;color:#4a4a4a;transform:scaleX(0.8929);transform-origin:right top;">10.0000</div>
<div class="t" style="left:689.5px;width:48.5px;text-align:right;top:458.83px;font-size:9.18px;color:#4a4a4a;transform:scaleX(0.8929);transform-origin:right top;">0.0000</div>
<div class="t" style="left:745.7px;top:458.83px;font-size:9.18px;color:#4a4a4a;transform:scaleX(0.8929);transform-origin:left top;">2/12/1995</div>
<svg class="a" style="left:518px;top:472.5px" width="9" height="9" viewBox="0 0 9 9"><path d="M1.2 7.8L2 5.4 6.2 1.2 7.8 2.8 3.6 7Z" fill="#e6b93a"/><path d="M6.2 1.2L7 0.4 8.6 2 7.8 2.8Z" fill="#c8662a"/><path d="M1.2 7.8L2 5.4 3.6 7Z" fill="#f3dca8"/></svg>
<div class="t" style="left:534.7px;top:472.83px;font-size:9.18px;color:#b57a3e;transform:scaleX(0.8929);transform-origin:left top;">003357...</div>
<div class="t" style="left:582.7px;top:472.83px;font-size:9.18px;color:#4a4a4a;transform:scaleX(0.8929);transform-origin:left top;">Job Req...</div>
<div class="t" style="left:627.5px;width:44.0px;text-align:right;top:472.83px;font-size:9.18px;color:#4a4a4a;transform:scaleX(0.8929);transform-origin:right top;">1.0000</div>
<div class="t" style="left:689.5px;width:48.5px;text-align:right;top:472.83px;font-size:9.18px;color:#4a4a4a;transform:scaleX(0.8929);transform-origin:right top;">0.0000</div>
<div class="t" style="left:745.7px;top:472.83px;font-size:9.18px;color:#4a4a4a;transform:scaleX(0.8929);transform-origin:left top;">5/21/2014</div>
<svg class="a" style="left:518px;top:486.5px" width="9" height="9" viewBox="0 0 9 9"><path d="M1.2 7.8L2 5.4 6.2 1.2 7.8 2.8 3.6 7Z" fill="#e6b93a"/><path d="M6.2 1.2L7 0.4 8.6 2 7.8 2.8Z" fill="#c8662a"/><path d="M1.2 7.8L2 5.4 3.6 7Z" fill="#f3dca8"/></svg>
<div class="t" style="left:534.7px;top:486.83px;font-size:9.18px;color:#b57a3e;transform:scaleX(0.8929);transform-origin:left top;">0002782...</div>
<div class="t" style="left:582.7px;top:486.83px;font-size:9.18px;color:#4a4a4a;transform:scaleX(0.8929);transform-origin:left top;">Order</div>
<div class="t" style="left:627.5px;width:44.0px;text-align:right;top:486.83px;font-size:9.18px;color:#4a4a4a;transform:scaleX(0.8929);transform-origin:right top;">1.0000</div>
<div class="t" style="left:689.5px;width:48.5px;text-align:right;top:486.83px;font-size:9.18px;color:#4a4a4a;transform:scaleX(0.8929);transform-origin:right top;">0.0000</div>
<div class="t" style="left:745.7px;top:486.83px;font-size:9.18px;color:#4a4a4a;transform:scaleX(0.8929);transform-origin:left top;">2/17/2015</div>
<svg class="a" style="left:518px;top:500.5px" width="9" height="9" viewBox="0 0 9 9"><path d="M1.2 7.8L2 5.4 6.2 1.2 7.8 2.8 3.6 7Z" fill="#e6b93a"/><path d="M6.2 1.2L7 0.4 8.6 2 7.8 2.8Z" fill="#c8662a"/><path d="M1.2 7.8L2 5.4 3.6 7Z" fill="#f3dca8"/></svg>
<div class="t" style="left:534.7px;top:500.83px;font-size:9.18px;color:#b57a3e;transform:scaleX(0.8929);transform-origin:left top;">0040000...</div>
<div class="t" style="left:582.7px;top:500.83px;font-size:9.18px;color:#4a4a4a;transform:scaleX(0.8929);transform-origin:left top;">Shipped</div>
<div class="t" style="left:627.5px;width:44.0px;text-align:right;top:500.83px;font-size:9.18px;color:#4a4a4a;transform:scaleX(0.8929);transform-origin:right top;">0.0000</div>
<div class="t" style="left:689.5px;width:48.5px;text-align:right;top:500.83px;font-size:9.18px;color:#4a4a4a;transform:scaleX(0.8929);transform-origin:right top;">0.0000</div>
<div class="t" style="left:745.7px;top:500.83px;font-size:9.18px;color:#4a4a4a;transform:scaleX(0.8929);transform-origin:left top;">10/5/2018</div>
</div>
<div class="a" style="left:515px;top:555px;width:283px;height:13px;background:#f6f6f6"></div>
<div class="a" style="left:527.5px;top:557px;width:218px;height:10px;background:#e9e9e9"></div>
<div class="t" style="left:519px;top:557.36px;font-size:7.84px;color:#777;transform:scaleX(0.8929);transform-origin:left top;">◂</div>
<div class="t" style="left:789px;top:557.36px;font-size:7.84px;color:#777;transform:scaleX(0.8929);transform-origin:left top;">▸</div>
<svg class="a" style="left:785px;top:117px" width="11" height="15" viewBox="0 0 11 15"><path d="M1 1V12.5L3.8 10 6 14 7.8 13.2 5.8 9.3H9.5Z" fill="#fff" stroke="#222" stroke-width="0.9"/></svg>
<div class="a" style="left:800px;top:69px;width:160px;height:499px;background:#f3f3f3"></div>
<div class="a" style="left:799px;top:44px;width:1px;height:524px;background:#c9c9c9"></div>
<div class="a" style="left:800px;top:69px;width:153px;height:30px;background:#eeeeee"></div>
<svg class="a" style="left:807px;top:79px" width="12" height="11" viewBox="0 0 12 11"><path d="M6 0.5L11.5 2.8V8.5L6 10.8 0.5 8.5V2.8Z" fill="#5a8f6a"/><path d="M0.5 2.8L6 5 11.5 2.8M6 5V10.8" fill="none" stroke="#2f5f3f" stroke-width="0.8"/><path d="M0.5 2.8L6 0.5 11.5 2.8 6 5Z" fill="#9bbfa5"/></svg>
<div class="t" style="left:823px;top:81.30px;font-size:8.50px;color:#4a4a4a;font-weight:bold;">Functions</div>
<svg class="a" style="left:935px;top:82px" width="7" height="5" viewBox="0 0 7 5"><path d="M0.5 4.5h6L3.5 0.8z" fill="#bbb"/></svg>
<div class="a" style="left:805px;top:99px;width:148px;height:438px;background:#f8f8f8"></div>
<div class="t" style="left:819px;top:105.03px;font-size:9.18px;color:#555;transform:scaleX(0.8929);transform-origin:left top;">Location and Rev. Status</div>
<div class="t" style="left:819px;top:125.03px;font-size:9.18px;color:#555;transform:scaleX(0.8929);transform-origin:left top;">Lot/Bin/Heat/Serial</div>
<div class="t" style="left:819px;top:145.03px;font-size:9.18px;color:#555;transform:scaleX(0.8929);transform-origin:left top;">Inventory Cross Reference</div>
<div class="t" style="left:819px;top:165.03px;font-size:9.18px;color:#555;transform:scaleX(0.8929);transform-origin:left top;">Ship Status</div>
<div class="t" style="left:819px;top:185.03px;font-size:9.18px;color:#555;transform:scaleX(0.8929);transform-origin:left top;">Notes</div>
<div class="a" style="left:801px;top:203px;width:152px;height:1px;background:#e0e0e0"></div>
<div class="t" style="left:819px;top:212.73px;font-size:9.18px;color:#555;transform:scaleX(0.8929);transform-origin:left top;">Purchase Order History</div>
<div class="t" style="left:819px;top:232.73px;font-size:9.18px;color:#555;transform:scaleX(0.8929);transform-origin:left top;">Work Order History</div>
<div class="t" style="left:819px;top:252.73px;font-size:9.18px;color:#555;transform:scaleX(0.8929);transform-origin:left top;">Sales History</div>
<div class="t" style="left:819px;top:272.73px;font-size:9.18px;color:#555;transform:scaleX(0.8929);transform-origin:left top;">Item History</div>
<div class="t" style="left:819px;top:292.73px;font-size:9.18px;color:#555;transform:scaleX(0.8929);transform-origin:left top;">Inventory History</div>
<div class="a" style="left:801px;top:311px;width:152px;height:1px;background:#e0e0e0"></div>
<div class="t" style="left:819px;top:321.23px;font-size:9.18px;color:#555;transform:scaleX(0.8929);transform-origin:left top;">Router Maintenance</div>
<div class="t" style="left:819px;top:341.23px;font-size:9.18px;color:#555;transform:scaleX(0.8929);transform-origin:left top;">Inventory Maintenance</div>
<div class="t" style="left:819px;top:361.23px;font-size:9.18px;color:#555;transform:scaleX(0.8929);transform-origin:left top;">Bill of Material</div>
<div class="a" style="left:801px;top:380px;width:152px;height:1px;background:#e0e0e0"></div>
<div class="t" style="left:819px;top:389.23px;font-size:9.18px;color:#555;transform:scaleX(0.8929);transform-origin:left top;">Quotes</div>
<div class="t" style="left:819px;top:409.23px;font-size:9.18px;color:#555;transform:scaleX(0.8929);transform-origin:left top;">Vendor Quotes</div>
<div class="a" style="left:801px;top:427px;width:152px;height:1px;background:#e0e0e0"></div>
<div class="t" style="left:819px;top:436.73px;font-size:9.18px;color:#555;transform:scaleX(0.8929);transform-origin:left top;">Allocation/Consignment</div>
<svg class="a" style="left:820px;top:461px" width="7" height="5" viewBox="0 0 7 5"><path d="M0.5 0.5h6L3.5 4.2z" fill="#999"/></svg>
<div class="t" style="left:833px;top:459.30px;font-size:8.50px;color:#4a4a4a;font-weight:bold;">Scripts</div>
<div class="t" style="left:837px;top:478.23px;font-size:9.18px;color:#9a9a9a;transform:scaleX(0.8929);transform-origin:left top;">Script 1</div>
<div class="t" style="left:837px;top:498.23px;font-size:9.18px;color:#9a9a9a;transform:scaleX(0.8929);transform-origin:left top;">Script 2</div>
<div class="t" style="left:837px;top:518.23px;font-size:9.18px;color:#9a9a9a;transform:scaleX(0.8929);transform-origin:left top;">Script 3</div>
<div class="a" style="left:801px;top:532px;width:152px;height:28px;background:#eaeaea"></div>
<svg class="a" style="left:808px;top:540px" width="14" height="12" viewBox="0 0 14 12"><path d="M0.5 1.5h5l1.5 1.5h6.5v8.5h-13z" fill="#f5a623"/><path d="M0.5 4h13v7.5h-13z" fill="#f7b53d"/></svg>
<div class="t" style="left:829px;top:543.30px;font-size:8.50px;color:#4a4a4a;font-weight:bold;">Open List from Part</div>
<svg class="a" style="left:934px;top:544px" width="7" height="5" viewBox="0 0 7 5"><path d="M0.5 4.5h6L3.5 0.8z" fill="#aaa"/></svg>
<div class="a" style="left:953px;top:69px;width:7px;height:499px;background:#f9f9f9"></div>
<svg class="a" style="left:954px;top:74px" width="6" height="5" viewBox="0 0 6 5"><path d="M0.5 4.5h5L3 0.8z" fill="#555"/></svg>
<svg class="a" style="left:955px;top:561px" width="6" height="5" viewBox="0 0 6 5"><path d="M0.5 0.5h5L3 4.2z" fill="#444"/></svg>
<div class="a" style="left:941px;top:52px;width:17px;height:1.3px;background:#9fb9e4"></div>
<div class="a" style="left:941px;top:56px;width:17px;height:1.3px;background:#9fb9e4"></div>
<div class="a" style="left:941px;top:60px;width:17px;height:1.3px;background:#9fb9e4"></div>
</body></html>
